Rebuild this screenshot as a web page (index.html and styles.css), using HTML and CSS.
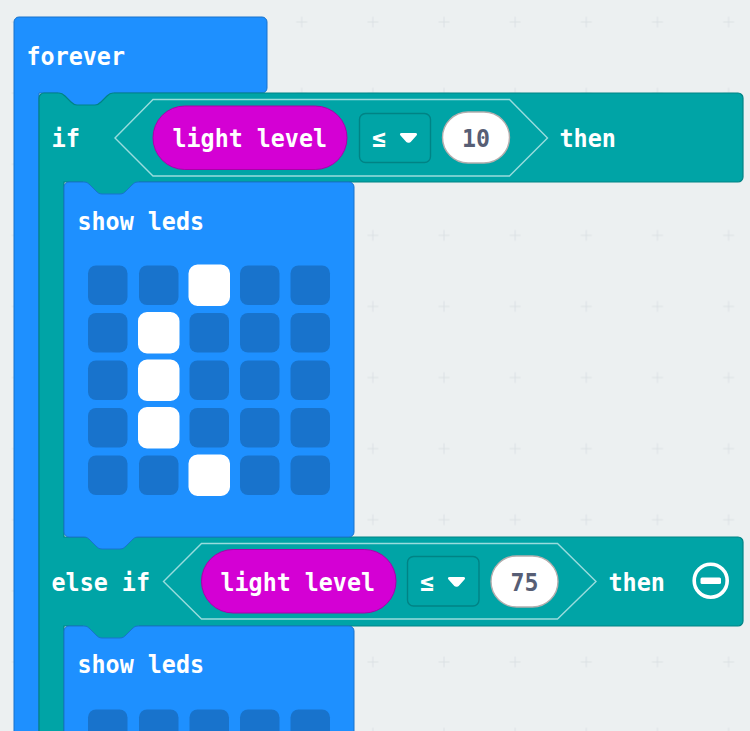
FILE: index.html
```html
<!DOCTYPE html>
<html lang="en">
<head>
<meta charset="utf-8">
<title>Blocks</title>
<link rel="stylesheet" href="styles.css">
</head>
<body>
<svg class="workspace" width="750" height="731" viewBox="0 0 750 731" xmlns="http://www.w3.org/2000/svg">
  <defs>
    <pattern id="grid" patternUnits="userSpaceOnUse" x="266.1" y="-13.5" width="71.15" height="71.1">
      <path class="plus" d="M30.1 35.5h11M35.6 30v11"/>
    </pattern>
  </defs>
  <rect width="750" height="731" fill="url(#grid)"/>

  <path class="blue" d="M14 22a5 5 0 0 1 5-5H262a5 5 0 0 1 5 5V88a5 5 0 0 1-5 5H39V740H14Z"/>
  <rect class="notch-blue" x="58" y="92" width="56" height="14"/>
  <text class="label" x="26.500" y="65" textLength="98.500" lengthAdjust="spacingAndGlyphs">forever</text>

  <path class="teal" d="M39 98a5 5 0 0 1 5-5H59c3 0 4.500 1.500 6 3l6 6c1.500 1.500 3 3 6 3h18c3 0 4.500-1.500 6-3l6-6c1.500-1.500 3-3 6-3H738a5 5 0 0 1 5 5V177a5 5 0 0 1-5 5H64V537H738a5 5 0 0 1 5 5V621a5 5 0 0 1-5 5H64V740H39Z"/>
  <text class="label" x="51.500" y="147" textLength="28.500" lengthAdjust="spacingAndGlyphs">if</text>
  <path class="slot" d="M115 138 153 99.500H509.500L547.500 138 509.500 176H153Z"/>
  <rect class="pill" x="153" y="106" width="194" height="63.500" rx="31.700"/>
  <text class="label" x="172.500" y="147" textLength="154.500" lengthAdjust="spacingAndGlyphs">light level</text>
  <rect class="dropdown" x="359.500" y="113.500" width="71" height="49" rx="6"/>
  <text class="label" x="372" y="147" textLength="14" lengthAdjust="spacingAndGlyphs">≤</text>
  <path class="caret" d="M401.500 133h14c1.500 0 2 1.300 1.200 2.300l-6 6.800c-.8.900-3.600.9-4.400 0l-6-6.800c-.8-1 -.3-2.300 1.200-2.300Z"/>
  <rect class="number" x="442.500" y="112" width="67" height="51" rx="25.500"/>
  <text class="value" x="462" y="147" textLength="28" lengthAdjust="spacingAndGlyphs">10</text>
  <text class="label" x="559.500" y="147" textLength="56.500" lengthAdjust="spacingAndGlyphs">then</text>

  <rect class="notch-teal" x="83" y="181" width="56" height="14"/>
  <path class="blue" d="M64 187a5 5 0 0 1 5-5H84c3 0 4.500 1.500 6 3l6 6c1.500 1.500 3 3 6 3h18c3 0 4.500-1.500 6-3l6-6c1.500-1.500 3-3 6-3H349a5 5 0 0 1 5 5V532a5 5 0 0 1-5 5H138c-3 0-4.500 1.500-6 3l-6 6c-1.500 1.500-3 3-6 3h-18c-3 0-4.500-1.500-6-3l-6-6c-1.500-1.500-3-3-6-3H69a5 5 0 0 1-5-5Z"/>
  <text class="label" x="77.500" y="230" textLength="126.500" lengthAdjust="spacingAndGlyphs">show leds</text>
  <g>
    <rect class="led" x="88" y="265.500" width="39.500" height="39.500" rx="8"/>
    <rect class="led" x="139" y="265.500" width="39.500" height="39.500" rx="8"/>
    <rect class="led on" x="189.500" y="265.500" width="39.500" height="39.500" rx="8"/>
    <rect class="led" x="240" y="265.500" width="39.500" height="39.500" rx="8"/>
    <rect class="led" x="290.500" y="265.500" width="39.500" height="39.500" rx="8"/>

    <rect class="led" x="88" y="313" width="39.500" height="39.500" rx="8"/>
    <rect class="led on" x="139" y="313" width="39.500" height="39.500" rx="8"/>
    <rect class="led" x="189.500" y="313" width="39.500" height="39.500" rx="8"/>
    <rect class="led" x="240" y="313" width="39.500" height="39.500" rx="8"/>
    <rect class="led" x="290.500" y="313" width="39.500" height="39.500" rx="8"/>

    <rect class="led" x="88" y="360.500" width="39.500" height="39.500" rx="8"/>
    <rect class="led on" x="139" y="360.500" width="39.500" height="39.500" rx="8"/>
    <rect class="led" x="189.500" y="360.500" width="39.500" height="39.500" rx="8"/>
    <rect class="led" x="240" y="360.500" width="39.500" height="39.500" rx="8"/>
    <rect class="led" x="290.500" y="360.500" width="39.500" height="39.500" rx="8"/>

    <rect class="led" x="88" y="408" width="39.500" height="39.500" rx="8"/>
    <rect class="led on" x="139" y="408" width="39.500" height="39.500" rx="8"/>
    <rect class="led" x="189.500" y="408" width="39.500" height="39.500" rx="8"/>
    <rect class="led" x="240" y="408" width="39.500" height="39.500" rx="8"/>
    <rect class="led" x="290.500" y="408" width="39.500" height="39.500" rx="8"/>

    <rect class="led" x="88" y="455.500" width="39.500" height="39.500" rx="8"/>
    <rect class="led" x="139" y="455.500" width="39.500" height="39.500" rx="8"/>
    <rect class="led on" x="189.500" y="455.500" width="39.500" height="39.500" rx="8"/>
    <rect class="led" x="240" y="455.500" width="39.500" height="39.500" rx="8"/>
    <rect class="led" x="290.500" y="455.500" width="39.500" height="39.500" rx="8"/>
  </g>

  <text class="label" x="51.500" y="591" textLength="98.500" lengthAdjust="spacingAndGlyphs">else if</text>
  <path class="slot" d="M163.500 581.500 201.500 543.500H557.500L596 581.500 557.500 619H201.500Z"/>
  <rect class="pill" x="201.500" y="549.500" width="194.500" height="63.500" rx="31.700"/>
  <text class="label" x="220.500" y="591" textLength="154.500" lengthAdjust="spacingAndGlyphs">light level</text>
  <rect class="dropdown" x="407.500" y="556.500" width="71.500" height="49.500" rx="6"/>
  <text class="label" x="420" y="591" textLength="14" lengthAdjust="spacingAndGlyphs">≤</text>
  <path class="caret" d="M449.500 577h14c1.500 0 2 1.300 1.200 2.300l-6 6.800c-.8.900-3.600.9-4.400 0l-6-6.800c-.8-1 -.3-2.300 1.200-2.300Z"/>
  <rect class="number" x="491" y="556" width="67" height="51" rx="25.500"/>
  <text class="value" x="510.500" y="591" textLength="28" lengthAdjust="spacingAndGlyphs">75</text>
  <text class="label" x="608.500" y="591" textLength="56.500" lengthAdjust="spacingAndGlyphs">then</text>
  <circle class="ring" cx="710.700" cy="580.700" r="16.500"/>
  <rect class="minus" x="700.500" y="577.500" width="20.500" height="6.500" rx="1.500"/>

  <rect class="notch-teal" x="83" y="625" width="56" height="14"/>
  <path class="blue" d="M64 631a5 5 0 0 1 5-5H84c3 0 4.500 1.500 6 3l6 6c1.500 1.500 3 3 6 3h18c3 0 4.500-1.500 6-3l6-6c1.500-1.500 3-3 6-3H349a5 5 0 0 1 5 5V740H64Z"/>
  <text class="label" x="77.500" y="673" textLength="126.500" lengthAdjust="spacingAndGlyphs">show leds</text>
  <g>
    <rect class="led" x="88" y="709.500" width="39.500" height="39.500" rx="8"/>
    <rect class="led" x="139" y="709.500" width="39.500" height="39.500" rx="8"/>
    <rect class="led" x="189.500" y="709.500" width="39.500" height="39.500" rx="8"/>
    <rect class="led" x="240" y="709.500" width="39.500" height="39.500" rx="8"/>
    <rect class="led" x="290.500" y="709.500" width="39.500" height="39.500" rx="8"/>
  </g>
</svg>
</body>
</html>
```
FILE: styles.css
```css
html, body {
  margin: 0;
  padding: 0;
  background: #ecf0f1;
  overflow: hidden;
}

.workspace {
  display: block;
}

.plus {
  fill: none;
  stroke: #dbe1e4;
  stroke-width: 1;
}

.blue {
  fill: #1e90ff;
  stroke: #1873cc;
  stroke-width: 1;
}

.notch-blue {
  fill: #1e90ff;
}

.notch-teal {
  fill: #00a4a6;
}

.teal {
  fill: #00a4a6;
  stroke: #008385;
  stroke-width: 1.2;
}

.slot {
  fill: none;
  stroke: #99dcdd;
  stroke-width: 1.4;
}

.pill {
  fill: #d400d4;
  stroke: #aa00aa;
  stroke-width: 1;
}

.dropdown {
  fill: #00a4a6;
  stroke: #008385;
  stroke-width: 1.4;
}

.caret {
  fill: #fff;
}

.number {
  fill: #fff;
  stroke: #b5aeae;
  stroke-width: 1.4;
}

.label,
.value {
  font-family: "DejaVu Sans Mono", monospace;
  font-weight: 700;
  font-size: 25px;
}

.label {
  fill: #fff;
}

.value {
  fill: #575e75;
}

.led {
  fill: #1873cc;
}

.led.on {
  fill: #fff;
  stroke: #fff;
  stroke-width: 2;
}

.ring {
  fill: none;
  stroke: #fff;
  stroke-width: 3.6;
}

.minus {
  fill: #fff;
}
```
